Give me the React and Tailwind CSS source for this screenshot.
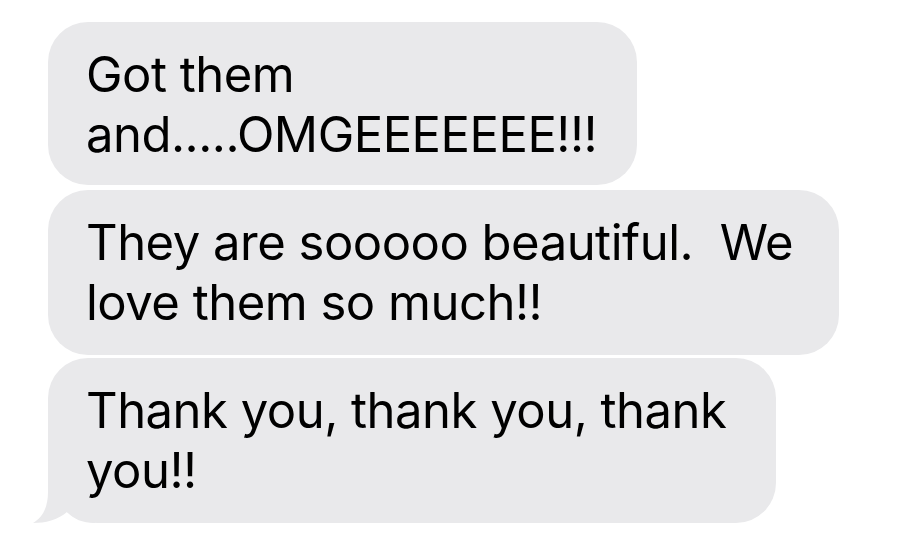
const Tail = () => (
    <svg className="absolute left-[-18px] bottom-0" width="65" height="55" viewBox="30 468 65 55">
        <path d="M48,468 L48,492 C48,508 42,518 33,523 C45,523 58,520 67,512 C74,519 82,523 95,523 L95,468 Z" fill="#e9e9eb" />
    </svg>
);

const Bubble = ({ lines, className, tail }) => (
    <div className={`relative bg-[#e9e9eb] rounded-[40px] pl-[38px] pt-[23px] ${className}`}>
        {tail && <Tail />}
        {lines.map((line, i) => (
            <div key={i} className="relative whitespace-pre">{line}</div>
        ))}
    </div>
);

export default function App() {
    return (
        <div className="w-[921px] h-[536px] bg-white pt-[22px] pl-[48px] text-black text-[49px] leading-[60px] tracking-[-0.5px] font-['Inter',sans-serif]">
            <div className="flex flex-col">
                <Bubble lines={["Got them", "and.....OMGEEEEEEE!!!"]} className="w-[589px] pb-[20px]" />
                <Bubble lines={["They are sooooo beautiful.  We", "love them so much!!"]} className="w-[791px] pb-[22px] mt-[5px]" />
                <Bubble lines={["Thank you, thank you, thank", "you!!"]} className="w-[728px] pb-[22px] mt-[3px] rounded-bl-[50px]" tail />
            </div>
        </div>
    );
}
